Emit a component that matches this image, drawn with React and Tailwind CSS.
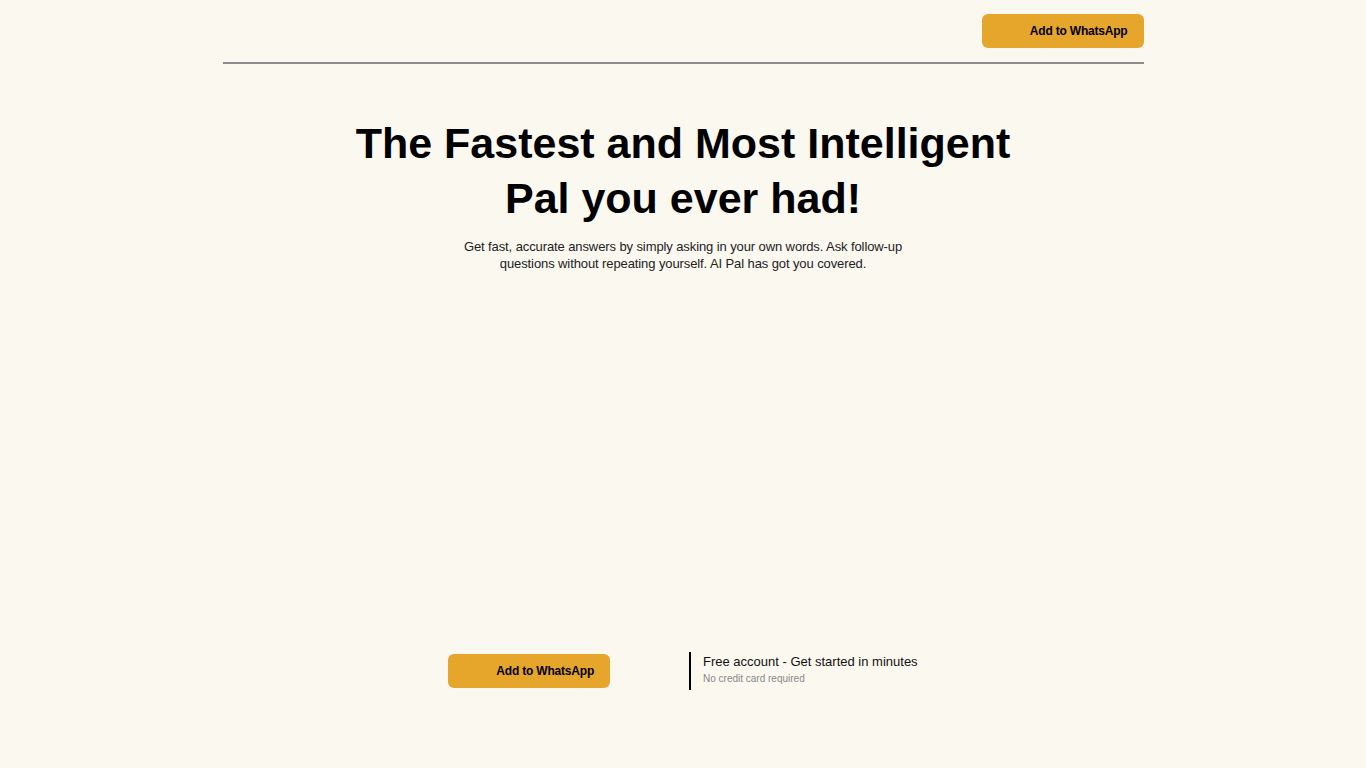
import React from 'react';

const WhatsAppButton = () => (
  <button className="flex items-center gap-2 rounded-md bg-[#e6a62b] px-4 py-2 text-[12px] font-bold tracking-[-0.2px] text-black">
    <span className="inline-block h-[18px] w-6" />
    <span className="leading-[18px]">Add to WhatsApp</span>
  </button>
);

export default function App() {
  return (
    <div
      className="min-h-[768px] bg-[#fbf8f0] text-black"
      style={{ fontFamily: '"Liberation Sans", Arial, sans-serif' }}
    >
      {/* Header */}
      <header className="mx-auto flex w-[921px] justify-end border-b-2 border-[#8c8c8c] py-[14px]">
        <WhatsAppButton />
      </header>

      {/* Hero */}
      <section className="mx-auto flex w-[921px] flex-col items-center pt-[52px]">
        <h1 className="text-center text-[43px] font-bold leading-[55px]">
          The Fastest and Most Intelligent
          <br />
          Pal you ever had!
        </h1>
        <p className="mt-[12px] w-[460px] text-center text-[13px] leading-[17px] tracking-[-0.1px] text-[#222]">
          Get fast, accurate answers by simply asking in your own words. Ask follow-up
          questions without repeating yourself. AI Pal has got you covered.
        </p>
      </section>

      {/* CTA */}
      <section className="mt-[380px] flex items-center justify-center gap-[79px]">
        <WhatsAppButton />
        <div className="border-l-2 border-black pb-[4px] pl-3 pt-[1px]">
          <p className="text-[13px] leading-[18px] text-[#111]">Free account - Get started in minutes</p>
          <p className="mt-[1px] text-[10px] leading-[14px] text-[#888]">No credit card required</p>
        </div>
      </section>
    </div>
  );
}
